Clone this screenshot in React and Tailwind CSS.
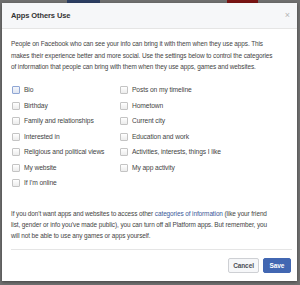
import React from "react";

const leftItems = [
  "Bio",
  "Birthday",
  "Family and relationships",
  "Interested in",
  "Religious and political views",
  "My website",
  "If I'm online",
];

const rightItems = [
  "Posts on my timeline",
  "Hometown",
  "Current city",
  "Education and work",
  "Activities, interests, things I like",
  "My app activity",
];

function Check({ label, focused }) {
  return (
    <div className="h-[15.5px] flex items-center">
      <span
        className={
          focused
            ? "w-[8px] h-[8px] rounded-[1px] border border-[#8fa6d4] bg-gradient-to-b from-[#f4f6fb] to-[#dfe5f1] shrink-0"
            : "w-[8px] h-[8px] rounded-[1px] border border-[#c4c4c4] bg-gradient-to-b from-white to-[#ececec] shrink-0"
        }
      />
      <span className="ml-[4px] whitespace-nowrap text-[6.7px]">{label}</span>
    </div>
  );
}

export default function App() {
  return (
    <div
      className="relative w-[300px] h-[285px] overflow-hidden bg-[#707070] pt-[3px] pl-[2px] pr-[3px]"
      style={{ fontFamily: '"Liberation Sans", Arial, sans-serif' }}
    >
      {/* page behind the overlay */}
      <div className="absolute top-0 left-[67px] w-[33px] h-[3px] bg-[#2d3f63]" />
      <div className="absolute top-0 left-[227px] w-[31px] h-[3px] bg-[#7a1414]" />

      <div className="relative bg-white h-[278px] flex flex-col shadow-[0_1px_3px_rgba(0,0,0,0.4)]">
        <div className="h-[26px] bg-[#f6f7f9] border-b border-[#e5e5e5] flex items-center justify-between pl-[9px] pr-[7px]">
          <span className="text-[7.5px] font-bold text-[#333] tracking-[-0.1px]">Apps Others Use</span>
          <span className="text-[9px] text-[#b5b5b5] leading-none">×</span>
        </div>

        <div className="pl-[9px] pr-[5px] pt-[9px] text-[6.45px] text-[#444] tracking-[-0.1px]">
          <p className="leading-[11.5px] whitespace-nowrap">
            People on Facebook who can see your info can bring it with them when they use apps. This
            <br />
            makes their experience better and more social. Use the settings below to control the categories
            <br />
            of information that people can bring with them when they use apps, games and websites.
          </p>

          <div className="mt-[10px] grid grid-cols-[108px_1fr] pl-[1px]">
            <div className="flex flex-col">
              {leftItems.map((l, i) => (
                <Check key={l} label={l} focused={i === 0} />
              ))}
            </div>
            <div className="flex flex-col">
              {rightItems.map((l) => (
                <Check key={l} label={l} />
              ))}
            </div>
          </div>

          <p className="mt-[17px] leading-[11px] whitespace-nowrap">
            If you don't want apps and websites to access other{" "}
            <span className="text-[#3b5998]">categories of information</span> (like your friend
            <br />
            list, gender or info you've made public), you can turn off all Platform apps. But remember, you
            <br />
            will not be able to use any games or apps yourself.
          </p>

          <div className="mt-[8px] border-t border-[#e5e5e5]" />

          <div className="mt-[8px] flex justify-end gap-[4px] pr-[1px]">
            <button className="w-[31px] h-[15px] rounded-[2px] border border-[#ced0d4] bg-[#f6f7f9] text-[6.5px] font-bold text-[#4b4f56]">
              Cancel
            </button>
            <button className="w-[28px] h-[15px] rounded-[2px] border border-[#4267b2] bg-[#4267b2] text-[6.5px] font-bold text-white">
              Save
            </button>
          </div>
        </div>
      </div>
    </div>
  );
}
